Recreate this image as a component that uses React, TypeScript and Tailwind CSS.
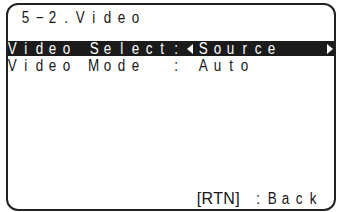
import React from "react";

const Cell = ({ children }: { children?: React.ReactNode }) => (
  <span className="w-[13.7px] shrink-0 inline-block text-center">
    <span className="inline-block scale-x-[0.84]">{children}</span>
  </span>
);

const Cells = ({ text }: { text: string }) => (
  <>
    {Array.from(text).map((ch, i) => (
      <Cell key={i}>{ch === " " ? "\u00a0" : ch}</Cell>
    ))}
  </>
);

const TriLeft = () => (
  <svg width="6" height="10" viewBox="0 0 6 10">
    <polygon points="6,0 6,10 0,5" fill="currentColor" />
  </svg>
);

const TriRight = () => (
  <svg width="6" height="10" viewBox="0 0 6 10">
    <polygon points="0,0 0,10 6,5" fill="currentColor" />
  </svg>
);

export default function App() {
  return (
    <div className="w-[340px] h-[212px] bg-white pt-[3px] pl-[6px] pr-[4px] pb-[1px] font-['Liberation_Sans',Arial,sans-serif] text-[16px] text-[#161616]">
      <div className="h-full border-2 border-[#222] rounded-[12px] flex flex-col overflow-hidden">
        <div className="mt-[5px] h-[16px] leading-[16px] flex -ml-[3px]">
          <Cells text={" 5\u22122.Video"} />
        </div>
        <div className="mt-[15px] h-[15px] pt-[1px] leading-[14px] bg-[#1b1b1b] text-white flex -ml-[3px]">
          <Cells text="Video Select:" />
          <span className="w-[13.7px] shrink-0 flex items-center justify-center">
            <TriLeft />
          </span>
          <Cells text="Source" />
          <span className="flex-1" />
          <span className="mr-[1px] flex items-center">
            <TriRight />
          </span>
        </div>
        <div className="mt-[2px] h-[15px] pt-[1px] leading-[14px] flex -ml-[3px]">
          <Cells text="Video Mode  : Auto" />
        </div>
        <div className="flex-1" />
        <div className="mb-[2px] h-[16px] leading-[16px] flex -ml-[3px]">
          <Cells text="              " />
          <span className="w-[41.1px] shrink-0 whitespace-nowrap tracking-[0.4px]">[RTN]</span>
          <Cells text=" :Back" />
        </div>
      </div>
    </div>
  );
}
